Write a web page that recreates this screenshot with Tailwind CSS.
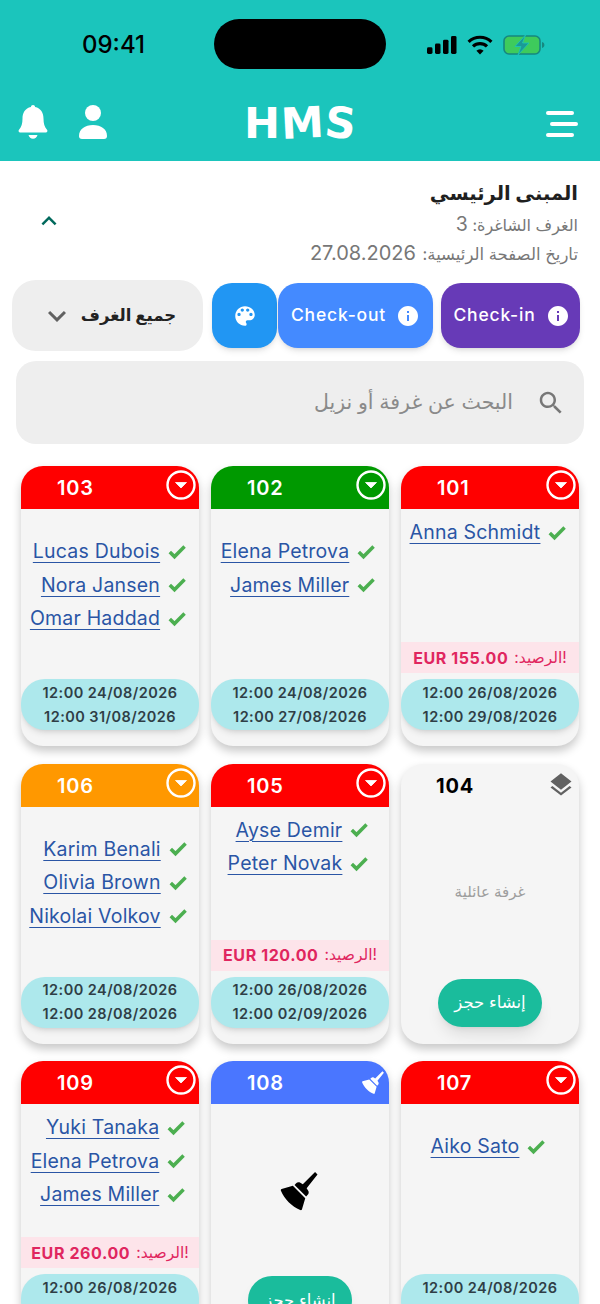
<!DOCTYPE html>
<html lang="ar">
<head>
  <meta charset="UTF-8">
  <meta name="viewport" content="width=device-width, initial-scale=1.0">
  <title>HMS</title>
  <script src="https://cdn.jsdelivr.net/npm/@tailwindcss/browser@4"></script>
</head>
<body class="h-[1304px] w-[600px] overflow-hidden bg-white font-['Inter','DejaVu_Sans',sans-serif]">
  <!-- shared icons -->
  <svg class="hidden">
    <symbol id="i-info" viewBox="0 0 24 24"><path d="M12 2C6.48 2 2 6.48 2 12s4.48 10 10 10 10-4.48 10-10S17.52 2 12 2zm1 15h-2v-6h2v6zm0-8h-2V7h2v2z"/></symbol>
    <symbol id="i-check" viewBox="0 0 24 24"><path d="M9 16.17L4.83 12l-1.42 1.41L9 19 21 7l-1.41-1.41z" stroke="currentColor" stroke-width="2.200"/></symbol>
    <symbol id="i-broom" viewBox="0 0 24 24"><path d="M22 2.6 20.6 1.2 13.6 8.2l-1.4-.9c-.9-.5-1.8-.3-2.4.3l-.9.9 6.6 6.6.9-.9c.6-.6.8-1.6.3-2.4l-.9-1.4zM7.9 9l7.1 7.1-1.9 6.4c-.1.4-.6.6-1 .4C7.4 21 3 16.6 1.1 11.9c-.2-.4 0-.8.4-1z"/></symbol>
  </svg>

  <header class="h-[161px] bg-[#1bc5bc]">
    <div class="relative flex h-[90px] items-center justify-between pb-[1px] pl-[82px] pr-[55px]">
      <span class="mt-[1px] text-[24px] font-medium leading-none text-black">09:41</span>
      <div class="absolute left-[214px] top-[19px] h-[50px] w-[172px] rounded-full bg-black"></div>
      <div class="flex items-center gap-[10px]">
        <svg class="h-[18px] w-[30px]" viewBox="0 0 30 19" preserveAspectRatio="none" fill="#000"><rect x="0" y="12" width="5.5" height="7" rx="1.5"/><rect x="8" y="8" width="5.5" height="11" rx="1.5"/><rect x="16" y="4" width="5.5" height="15" rx="1.5"/><rect x="24" y="0" width="5.5" height="19" rx="1.5"/></svg>
        <svg class="h-[20px] w-[26px]" viewBox="0 0 26 20" fill="none" stroke="#000" stroke-width="3.200"><path d="M1.6 6.8a16.5 16.5 0 0 1 22.8 0"/><path d="M6 11.4a10.2 10.2 0 0 1 14 0"/><path d="M13 19.6 9.4 15.8a5 5 0 0 1 7.2 0z" fill="#000" stroke="none"/></svg>
        <svg class="h-[20px] w-[42px]" viewBox="0 0 42 20"><rect x="1" y="1" width="36" height="18" rx="5" fill="#3ecb5c" stroke="#16887f" stroke-width="1.600"/><path d="M39 7c1.600.4 2.400 1.600 2.400 3s-.8 2.600-2.400 3z" fill="#16887f"/><path d="M22.500 0 12 11.500h6L15 20l11-12h-6.500z" fill="#1a9a96" stroke="#1bc5bc" stroke-width=".8"/></svg>
      </div>
    </div>
    <div class="relative flex h-[71px] items-start justify-between pl-[18px] pr-[22px] pt-[15px]">
      <div class="flex items-center gap-[31px]">
        <svg class="h-[34px] w-[30px]" viewBox="0 0 30 34" fill="#fff"><path d="M15 0c1.200 0 2 .9 2.100 2.100C22.800 3.200 25.500 8 25.500 13.500c0 5 1 8.500 3.500 11.300.9 1 .4 2.700-1.200 2.700H2.200C.6 27.500.1 25.800 1 24.800c2.500-2.800 3.500-6.300 3.500-11.300C4.500 8 7.200 3.200 12.900 2.100 13 .9 13.800 0 15 0z"/><path d="M10.500 30h9c-.6 2.300-2.300 3.800-4.500 3.800s-3.900-1.500-4.500-3.800z"/></svg>
        <svg class="h-[34px] w-[28px]" viewBox="0 0 28 34" fill="#fff"><circle cx="14" cy="8" r="8"/><path d="M0 31c0-7 6-11 14-11s14 4 14 11c0 2-1 3-3 3H3c-2 0-3-1-3-3z"/></svg>
      </div>
      <div class="absolute left-[242px] top-[11px] flex h-[44px] w-[116px] items-center justify-center gap-[1px] font-['DejaVu_Sans',sans-serif] text-[43px] font-bold leading-none text-white">
        <span>H</span><span class="-rotate-3">M</span><span class="rotate-6">S</span>
      </div>
      <div class="mt-[6px] flex w-[32px] flex-col gap-[7px]">
        <span class="h-[4px] w-[28px] rounded-full bg-white"></span>
        <span class="ml-[4px] h-[4px] w-[28px] rounded-full bg-white"></span>
        <span class="h-[4px] w-[28px] rounded-full bg-white"></span>
      </div>
    </div>
  </header>

  <main>
    <section class="flex h-[119px] items-start justify-between pl-[34px] pr-[22px] pt-[17px]">
      <svg class="mt-[28px] h-[30px] w-[30px]" viewBox="0 0 24 24" fill="#00695c"><path d="M7.410 15.410 12 10.830l4.590 4.580L18 14l-6-6-6 6z"/></svg>
      <div dir="rtl" class="text-right">
        <h1 class="text-[19.500px] font-bold leading-[30px] text-[#1f1f1f]">المبنى الرئيسي</h1>
        <p class="mt-[2px] text-[16px] leading-[28px] text-[#777]">الغرف الشاغرة: <span class="text-[19.500px]">3</span></p>
        <p class="-mt-[1px] text-[16.500px] leading-[30px] text-[#777]">تاريخ الصفحة الرئيسية: <span class="mr-[2px] text-[20px] tracking-[0.2px]">27.08.2026</span></p>
      </div>
    </section>

    <div class="flex items-center pl-[12px] pr-[20px]">
      <div class="flex h-[71px] w-[191px] items-center justify-center gap-[6px] rounded-[24px] bg-[#eeeeee]">
        <svg class="h-[36px] w-[36px]" viewBox="0 0 24 24" fill="#616161"><path d="M7.410 8.590 12 13.170l4.590-4.580L18 10l-6 6-6-6z"/></svg>
        <span class="text-[16.500px] font-bold text-[#222]">جميع الغرف</span>
      </div>
      <button class="ml-[9px] flex h-[65px] w-[65px] items-center justify-center rounded-[20px] bg-[#2196f3] shadow-md">
        <svg class="h-[26px] w-[26px]" viewBox="0 0 24 24" fill="#fff"><path d="M12 3c-4.970 0-9 4.030-9 9s4.030 9 9 9c.83 0 1.500-.67 1.500-1.500 0-.39-.15-.74-.39-1.010-.23-.26-.38-.61-.38-.99 0-.83.67-1.500 1.500-1.500H16c2.760 0 5-2.240 5-5 0-4.420-4.030-8-9-8zm-5.500 9c-.83 0-1.500-.67-1.500-1.500S5.670 9 6.500 9 8 9.670 8 10.500 7.330 12 6.500 12zm3-4C8.670 8 8 7.330 8 6.500S8.670 5 9.500 5s1.500.67 1.500 1.500S10.330 8 9.500 8zm5 0c-.83 0-1.500-.67-1.500-1.500S13.670 5 14.500 5s1.500.67 1.500 1.500S15.330 8 14.500 8zm3 4c-.83 0-1.500-.67-1.500-1.500S16.670 9 17.500 9s1.500.67 1.500 1.500-.67 1.500-1.500 1.500z"/></svg>
      </button>
      <button class="ml-[1px] flex h-[65px] w-[155px] items-center justify-center gap-[10px] rounded-[20px] bg-[#448aff] text-[17.500px] font-medium tracking-[0.8px] text-white shadow-md">
        Check-out
        <svg class="h-[24px] w-[24px]" fill="#fff"><use href="#i-info"/></svg>
      </button>
      <button class="ml-[8px] flex h-[65px] w-[139px] items-center justify-center gap-[10px] rounded-[20px] bg-[#673ab7] pl-[2px] text-[17.500px] font-medium tracking-[0.8px] text-white shadow-md">
        Check-in
        <svg class="h-[24px] w-[24px]" fill="#fff"><use href="#i-info"/></svg>
      </button>
    </div>

    <div class="mx-[16px] mt-[10px] flex h-[83px] items-center justify-end gap-[23px] rounded-[20px] bg-[#eeeeee] pr-[18px]">
      <span dir="rtl" class="text-[20.500px] text-[#8a8a8a]">البحث عن غرفة أو نزيل</span>
      <svg class="h-[30px] w-[30px]" viewBox="0 0 24 24" fill="#777"><path d="M15.500 14h-.79l-.28-.27C15.410 12.590 16 11.110 16 9.500 16 5.910 13.090 3 9.500 3S3 5.910 3 9.500 5.910 16 9.500 16c1.610 0 3.090-.59 4.230-1.570l.27.28v.79l5 4.990L20.490 19l-4.990-5zm-6 0C7.010 14 5 11.990 5 9.500S7.010 5 9.500 5 14 7.010 14 9.500 11.990 14 9.500 14z"/></svg>
    </div>

    <div id="rooms" dir="rtl" class="mt-[22px] grid grid-cols-[178px_178px_178px] gap-x-[12px] gap-y-[17.5px] px-[21px]"></div>
  </main>

  <script>
    const rooms = [
      { no: 101, color: 'bg-[#ff0000]', guests: ['Anna Schmidt'], balance: '155.00', dates: ['26/08/2026', '29/08/2026'] },
      { no: 102, color: 'bg-[#009900]', guests: ['Elena Petrova', 'James Miller'], dates: ['24/08/2026', '27/08/2026'] },
      { no: 103, color: 'bg-[#ff0000]', guests: ['Lucas Dubois', 'Nora Jansen', 'Omar Haddad'], dates: ['24/08/2026', '31/08/2026'] },
      { no: 104, family: true },
      { no: 105, color: 'bg-[#ff0000]', guests: ['Ayse Demir', 'Peter Novak'], balance: '120.00', dates: ['26/08/2026', '02/09/2026'] },
      { no: 106, color: 'bg-[#ff9800]', guests: ['Karim Benali', 'Olivia Brown', 'Nikolai Volkov'], dates: ['24/08/2026', '28/08/2026'] },
      { no: 107, color: 'bg-[#ff0000]', guests: ['Aiko Sato'], dates: ['24/08/2026', '28/08/2026'] },
      { no: 108, color: 'bg-[#4a76ff]', cleaning: true },
      { no: 109, color: 'bg-[#ff0000]', guests: ['Yuki Tanaka', 'Elena Petrova', 'James Miller'], balance: '260.00', dates: ['26/08/2026', '30/08/2026'] },
    ];

    const bookBtn = `<button dir="rtl" class="flex h-[48px] w-[104px] items-center justify-center rounded-full bg-[#1abc9c] text-[16.500px] text-white shadow-lg">إنشاء حجز</button>`;
    const ringIcon = `<svg class="-mt-[5px] h-[30px] w-[30px]" viewBox="0 0 30 30"><circle cx="15" cy="15" r="13.500" fill="none" stroke="#fff" stroke-width="2.400"/><path d="M9.500 12.500h11L15 18z" fill="#fff" stroke="#fff" stroke-width=".8" stroke-linejoin="round"/></svg>`;

    function guestRow(name) {
      return `<div class="flex h-[33.5px] items-center gap-[7px]">
        <span class="text-[19.500px] leading-none text-[#2a55a5] underline decoration-1 underline-offset-[4px] tracking-[0.2px]">${name}</span>
        <svg class="h-[20px] w-[20px] text-[#4caf50]" fill="#4caf50"><use href="#i-check"/></svg>
      </div>`;
    }

    function card(r) {
      let head, body;
      if (r.family) {
        head = `<div class="flex h-[43px] shrink-0 items-center justify-between pl-[35px] pr-[4px]">
          <span class="mt-[1px] text-[20px] font-bold tracking-[0.8px] text-black">${r.no}</span>
          <svg class="h-[28px] w-[28px]" viewBox="0 0 24 24" fill="#616161"><path d="M11.990 18.540l-7.370-5.730L3 14.070l9 7 9-7-1.630-1.270-7.380 5.740zM12 16l7.360-5.730L21 9l-9-7-9 7 1.630 1.270L12 16z"/></svg>
        </div>`;
        body = `<div class="flex flex-1 flex-col items-center">
          <p dir="rtl" class="mt-[74px] text-[15px] text-[#9e9e9e]">غرفة عائلية</p>
          <div class="mb-[17px] mt-auto">${bookBtn}</div>
        </div>`;
      } else if (r.cleaning) {
        head = `<div class="flex h-[43px] shrink-0 items-center justify-between pl-[36px] pr-[3px] ${r.color}">
          <span class="mt-[1px] text-[20px] font-semibold tracking-[0.8px] text-white">${r.no}</span>
          <svg class="h-[25px] w-[25px]" fill="#fff"><use href="#i-broom"/></svg>
        </div>`;
        body = `<div class="flex flex-1 flex-col items-center">
          <svg class="mt-[66px] h-[42px] w-[42px]" fill="#000"><use href="#i-broom"/></svg>
          <div class="mb-[17px] mt-auto">${bookBtn}</div>
        </div>`;
      } else {
        head = `<div class="flex h-[43px] shrink-0 items-center justify-between pl-[36px] pr-[3px] ${r.color}">
          <span class="mt-[1px] text-[20px] font-semibold tracking-[0.8px] text-white">${r.no}</span>
          ${ringIcon}
        </div>`;
        const pad = r.balance ? 'pt-[7px]' : 'pt-[26px]';
        const balance = r.balance
          ? `<div dir="rtl" class="flex h-[31px] shrink-0 items-center justify-center gap-[6px] bg-[#fde4ea] text-[15.500px] text-[#e0265f]"><span>!الرصيد:</span><span dir="ltr" class="text-[16px] font-bold tracking-[0.6px]">EUR ${r.balance}</span></div>`
          : '';
        body = `<div class="flex flex-1 justify-center pr-[3px] ${pad}">
            <div class="flex flex-col items-end">${r.guests.map(guestRow).join('')}</div>
          </div>
          ${balance}
          <div class="mb-[16px] mt-[6px] flex h-[51px] shrink-0 flex-col items-center justify-center rounded-[24px] bg-[#ade8ec] text-[14.500px] font-semibold leading-[24px] tracking-[0.45px] text-[#2f3e46] shadow-md">
            <span>12:00 ${r.dates[0]}</span>
            <span>12:00 ${r.dates[1]}</span>
          </div>`;
      }
      return `<article dir="ltr" class="flex h-[280px] flex-col overflow-hidden rounded-[22px] bg-[#f5f5f5] shadow-[0_5px_10px_rgba(0,0,0,0.22)]">${head}${body}</article>`;
    }

    document.getElementById('rooms').innerHTML = rooms.map(card).join('');
  </script>
</body>
</html>
